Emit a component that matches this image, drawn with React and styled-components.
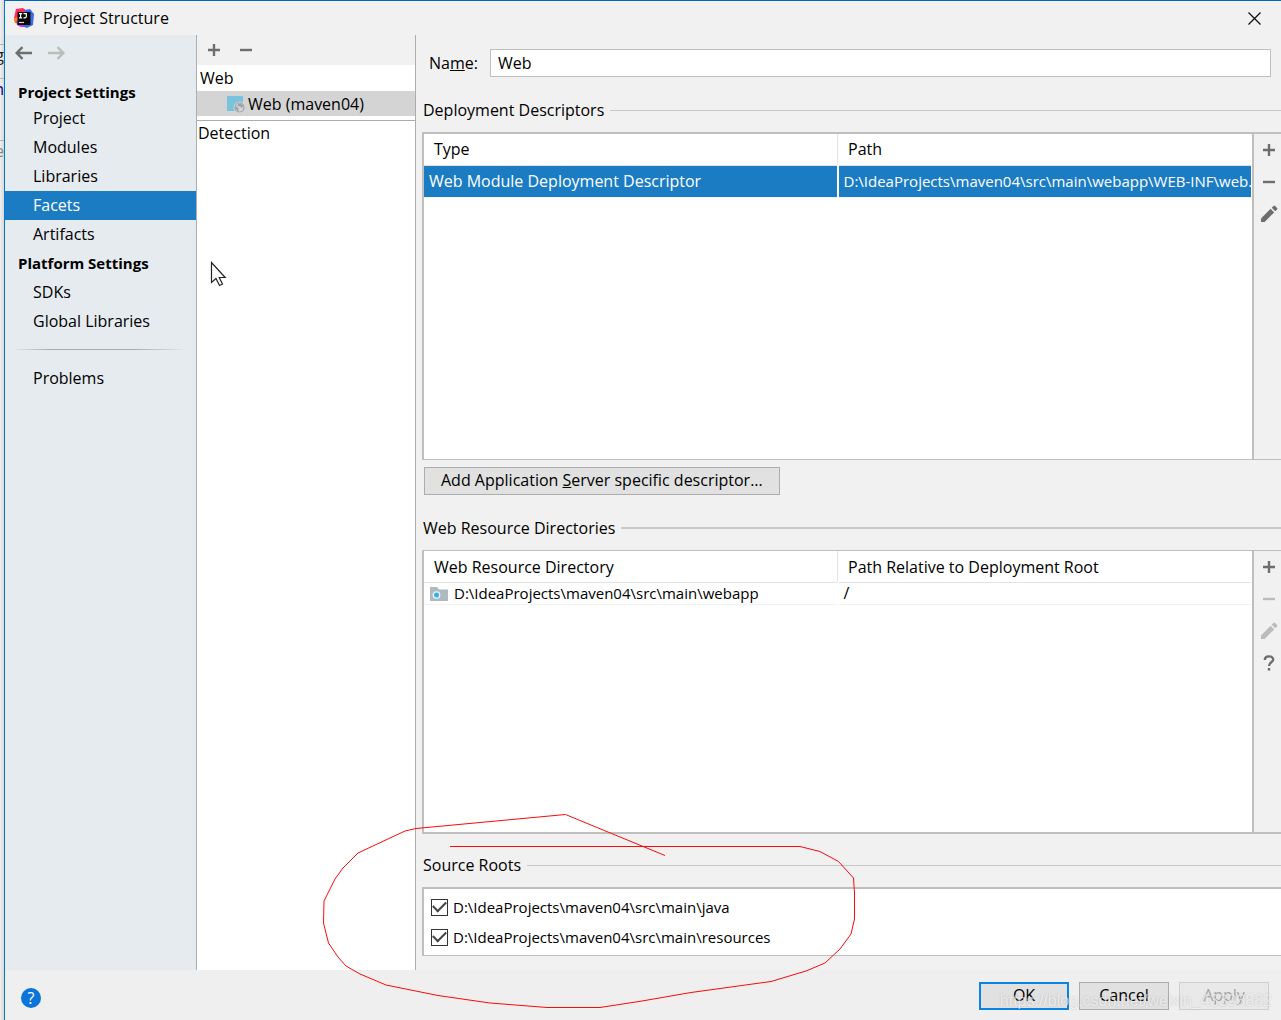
import React, { useState } from 'react';
import styled, { createGlobalStyle } from 'styled-components';

const GlobalStyle = createGlobalStyle`
  * {
    box-sizing: border-box;
  }

  body {
    margin: 0;
    background: #f0f0f0;
    color: #000;
    font-family: 'Open Sans', 'Noto Sans', sans-serif;
    font-size: 16px;
    line-height: 20px;
  }

  button, input {
    font: inherit;
    color: inherit;
  }
`;

const Desktop = styled.div`
  position: relative;
  display: flex;
  min-height: 100vh;
  overflow: hidden;
`;

const BackWindow = styled.div`
  flex: 0 0 4px;
  overflow: hidden;
  padding-top: 44px;
  background: linear-gradient(to right, #efefef, #d9d9d9);
  color: #333;
`;

const BackText = styled.div`
  height: ${({ $height }) => $height}px;
  border-top: 1px solid #b5b5b5;
  direction: rtl;
  color: ${({ $color }) => $color};
`;

const Window = styled.div`
  flex: 1;
  min-width: 0;
  display: flex;
  flex-direction: column;
  border-left: 1px solid #0078d7;
  border-top: 1px solid #0067c0;
`;

const TitleBar = styled.header`
  display: flex;
  align-items: center;
  gap: 9px;
  height: 34px;
  padding: 0 20px 0 9px;
  background: #f1f1f1;
`;

const Title = styled.h1`
  flex: 1;
  margin: 0;
  font-size: 16px;
  font-weight: 400;
`;

const IconButton = styled.button`
  display: flex;
  align-items: center;
  justify-content: center;
  padding: 0;
  border: none;
  background: none;
  color: #6e6e6e;

  &:disabled {
    color: #bcbcbc;
  }
`;

const Body = styled.div`
  flex: 1;
  min-height: 0;
  display: flex;
`;

const Sidebar = styled.nav`
  flex: 0 0 192px;
  border-right: 1px solid #adadad;
  background: #e5ebef;
`;

const History = styled.div`
  display: flex;
  gap: 16px;
  padding: 9px 10px 0;
  height: 43px;
  align-items: flex-start;
`;

const GroupTitle = styled.h2`
  margin: 0;
  padding: 4px 13px 0;
  height: ${({ $height }) => $height}px;
  font-size: 15px;
  font-weight: 700;
  line-height: 20px;
`;

const NavList = styled.ul`
  margin: 0;
  padding: 0;
  list-style: none;
`;

const NavLink = styled.a`
  display: block;
  padding: 4px 28px 5px;
  text-decoration: none;
  color: ${({ $active }) => ($active ? '#fff' : '#000')};
  background: ${({ $active }) => ($active ? '#1b7cc4' : 'transparent')};
`;

const NavDivider = styled.hr`
  height: 1px;
  margin: 13px 8px 14px;
  border: none;
  background: linear-gradient(to right, transparent, #adadad 20%, #adadad 70%, transparent);
`;

const FacetPane = styled.section`
  flex: 0 0 219px;
  border-right: 1px solid #adadad;
  background: #fff;
`;

const PaneToolbar = styled.div`
  display: flex;
  align-items: center;
  gap: 18px;
  height: 30px;
  padding: 0 10px;
  background: #f1f1f1;
`;

const FacetGroup = styled.div`
  padding: 3px 3px;
`;

const FacetItem = styled.div`
  display: flex;
  align-items: center;
  gap: 3px;
  height: 25px;
  padding-left: 30px;
  background: #d4d4d4;
`;

const Detection = styled.div`
  margin-top: 4px;
  padding: 2px 1px;
  border-top: 1px solid #adadad;
`;

const Editor = styled.main`
  flex: 1;
  min-width: 0;
  display: flex;
  flex-direction: column;
  padding: 14px 0 14px 6px;
  background: #f1f1f1;
`;

const NameRow = styled.div`
  display: flex;
  align-items: center;
  gap: 12px;
  padding: 0 10px 0 7px;
`;

const NameInput = styled.input`
  flex: 1;
  min-width: 0;
  height: 28px;
  padding: 0 7px;
  border: 1px solid #bfbfbf;
  background: #fff;
`;

const SectionTitle = styled.h2`
  display: flex;
  align-items: center;
  gap: 6px;
  margin: ${({ $top }) => $top}px 0 12px 1px;
  font-size: 16px;
  font-weight: 400;
  line-height: 20px;

  &::after {
    content: '';
    flex: 1;
    height: ${({ $thick }) => ($thick ? 2 : 1)}px;
    background: #c8c8c8;
  }
`;

const TableBox = styled.div`
  flex: ${({ $grow }) => $grow} 1 0;
  min-height: 160px;
  display: flex;
  border: solid #bfbfbf;
  border-width: ${({ $heavyBottom }) => ($heavyBottom ? '1px 0 2px 2px' : '2px 0 1px 2px')};
`;

const TableArea = styled.div`
  flex: 1;
  min-width: 0;
  padding-right: 1px;
  border-right: 2px solid #bfbfbf;
  background: #fff;
`;

const Table = styled.table`
  width: 100%;
  table-layout: fixed;
  border-collapse: collapse;
`;

const HeadCell = styled.th`
  height: 31px;
  padding: 0 10px;
  border-bottom: 1px solid #e3e3e3;
  font-weight: 400;
  text-align: left;

  & + & {
    border-left: 1px solid #e3e3e3;
  }
`;

const Cell = styled.td`
  height: ${({ $selected }) => ($selected ? 32 : 22)}px;
  padding: 0 0 0 5px;
  overflow: hidden;
  white-space: nowrap;
  color: ${({ $selected }) => ($selected ? '#fff' : '#000')};
  background: ${({ $selected }) => ($selected ? '#1b7cc4' : '#fff')};
  border-bottom: 1px solid #f3f3f3;

  & + & {
    padding-left: ${({ $selected }) => ($selected ? 9 : 5)}px;
    border-left: 2px solid #fff;
  }

  svg {
    margin: 0 6px 0 1px;
    vertical-align: -2px;
  }
`;

const PathText = styled.span`
  font-size: 15px;
`;

const SideTools = styled.div`
  flex: 0 0 27px;
  display: flex;
  flex-direction: column;
  align-items: center;
  padding-left: 3px;

  ${IconButton} {
    height: 32px;
  }
`;

const PushButton = styled.button`
  height: 28px;
  padding: 0 16px 2px;
  border: 1px solid #adadad;
  background: #e1e1e1;
`;

const DescriptorButton = styled(PushButton)`
  align-self: flex-start;
  margin: 7px 0 0 2px;
`;

const RootList = styled.div`
  display: flex;
  flex-direction: column;
  gap: 10px;
  padding: 8px 7px;
  border: solid #bfbfbf;
  border-width: 2px 0 1px 2px;
  background: #fff;
`;

const RootLabel = styled.label`
  display: flex;
  align-items: center;
  gap: 5px;
`;

const Tick = styled.input`
  appearance: none;
  width: 17px;
  height: 17px;
  margin: 0;
  display: grid;
  place-content: center;
  border: 1px solid #333;
  background: #fff;

  &:checked::before {
    content: '';
    width: 11px;
    height: 6px;
    margin-top: -4px;
    border: solid #444;
    border-width: 0 0 2px 2px;
    transform: rotate(-45deg);
  }
`;

const Footer = styled.footer`
  display: flex;
  align-items: center;
  gap: 10px;
  height: 50px;
  padding: 2px 12px 0 16px;
  background: #efefef;
`;

const HelpButton = styled.button`
  width: 20px;
  height: 20px;
  margin: 4px auto 0 0;
  padding: 0;
  border: none;
  border-radius: 50%;
  background: #0a74da;
  color: #fff;
  line-height: 20px;
`;

const DialogButton = styled(PushButton)`
  width: 90px;
  padding: 0 0 2px;
  border: ${({ $primary }) => ($primary ? '2px solid #0a84e0' : '1px solid #adadad')};

  &:disabled {
    border-color: #cfcfcf;
    background: #e9e9e9;
    color: #a5a5a5;
  }
`;

const Overlay = styled.svg`
  position: absolute;
  left: ${({ $left }) => $left}px;
  top: ${({ $top }) => $top}px;
  pointer-events: none;
`;

const Watermark = styled.div`
  position: absolute;
  right: 9px;
  bottom: 9px;
  font-family: 'Liberation Sans', sans-serif;
  font-size: 16px;
  line-height: 20px;
  color: rgba(255, 255, 255, 0.65);
  text-shadow: 0 0 2px rgba(0, 0, 0, 0.2);
  pointer-events: none;
`;

const PlusIcon = () => (
  <svg width="14" height="14" viewBox="0 0 14 14">
    <path d="M7 1v12M1 7h12" stroke="currentColor" strokeWidth="2.4" />
  </svg>
);

const MinusIcon = () => (
  <svg width="14" height="14" viewBox="0 0 14 14">
    <path d="M1 7h12" stroke="currentColor" strokeWidth="2.4" />
  </svg>
);

const PencilIcon = () => (
  <svg width="18" height="18" viewBox="0 0 18 18" fill="currentColor">
    <path d="M1 13.4 10.6 3.8l3.6 3.6L4.6 17H1z" />
    <path d="M11.7 2.7 13.5.9q.8-.7 1.6 0l2 2q.7.8 0 1.6l-1.8 1.8z" />
  </svg>
);

const QuestionIcon = () => (
  <svg width="12" height="16" viewBox="0 0 12 16" fill="none" stroke="currentColor" strokeWidth="2.4">
    <path d="M1.8 5C1.8.2 10.2.2 10.2 4.6 10.2 7.4 6 7.3 6 11" />
    <path d="M6 13v2.6" />
  </svg>
);

const ArrowIcon = ({ right }) => (
  <svg width="17" height="18" viewBox="0 0 17 18" fill="none" stroke="currentColor" strokeWidth="2.4">
    <path d={right ? 'M0 9h15M9.5 3.2 15.3 9l-5.8 5.8' : 'M17 9H2M7.5 3.2 1.7 9l5.8 5.8'} />
  </svg>
);

const CloseIcon = () => (
  <svg width="13" height="13" viewBox="0 0 13 13" stroke="#111" strokeWidth="1.3">
    <path d="M.5.5l12 12M12.5.5l-12 12" />
  </svg>
);

const AppLogo = () => (
  <svg width="20" height="20" viewBox="0 0 20 20">
    <path d="M2 1l7-1 4 3-4 9-8 3-1-5z" fill="#fe2c63" />
    <path d="M0 10l5-1 3 6-3 2-5-4z" fill="#fc801d" />
    <path d="M11 2l5-1 4 5-1 11-6 3-8-3z" fill="#3d6ae8" />
    <path d="M2 13l5-1 4 7-4 0-4-2z" fill="#b13be0" />
    <rect x="3.5" y="4" width="13" height="13" fill="#080808" />
    <path d="M5 5.7h3.2M6.6 5.7v4.1M5 9.8h3.2M9.5 5.7h2.8v3q0 1.2-2.8 1.1" fill="none" stroke="#fff" strokeWidth="1.2" />
    <path d="M5 14.5h5" stroke="#ddd" strokeWidth="1.2" />
  </svg>
);

const FacetIcon = () => (
  <svg width="18" height="18" viewBox="0 0 18 18">
    <path d="M0 1h16v15H0z" fill="#7ac3dd" />
    <circle cx="12.5" cy="12.5" r="6" fill="#d4d4d4" />
    <circle cx="12.5" cy="12.5" r="4.5" fill="#d4d4d4" stroke="#9aa4aa" strokeWidth="1.2" />
    <path d="M8.5 11l2.5 1.5 1 3.5-2-.5-1.5-2zM11 9l3.5-.5 1.8 2-1.3 2.5-2-1.5-2.5-.5z" fill="#9aa4aa" />
  </svg>
);

const FolderIcon = () => (
  <svg width="18" height="14" viewBox="0 0 18 14">
    <path d="M0 0h7l2 2.5h9V14H0z" fill="#aebac0" />
    <circle cx="6.5" cy="8" r="3.2" fill="#35b1e6" stroke="#e9f6fc" strokeWidth="1.3" />
  </svg>
);

const projectItems = ['Project', 'Modules', 'Libraries', 'Facets', 'Artifacts'];
const platformItems = ['SDKs', 'Global Libraries'];

const NavGroup = ({ items, active, onSelect }) => (
  <NavList>
    {items.map((item) => (
      <li key={item}>
        <NavLink href="#" $active={item === active} onClick={() => onSelect(item)}>{item}</NavLink>
      </li>
    ))}
  </NavList>
);

const App = () => {
  const [active, setActive] = useState('Facets');
  const [name, setName] = useState('Web');
  const [roots, setRoots] = useState([
    { path: 'D:\\IdeaProjects\\maven04\\src\\main\\java', checked: true },
    { path: 'D:\\IdeaProjects\\maven04\\src\\main\\resources', checked: true },
  ]);

  const toggleRoot = (path) => {
    setRoots(roots.map((root) => (root.path === path ? { ...root, checked: !root.checked } : root)));
  };

  return (
    <Desktop>
      <GlobalStyle />
      <BackWindow aria-hidden="true">
        <BackText $height={34} $color="#222">g</BackText>
        <BackText $height={62} $color="#00007a">n</BackText>
        <BackText $height={60} $color="#888">e</BackText>
      </BackWindow>
      <Window>
        <TitleBar>
          <AppLogo />
          <Title>Project Structure</Title>
          <IconButton aria-label="Close"><CloseIcon /></IconButton>
        </TitleBar>

        <Body>
          <Sidebar>
            <History>
              <IconButton aria-label="Back"><ArrowIcon /></IconButton>
              <IconButton aria-label="Forward" disabled><ArrowIcon right /></IconButton>
            </History>
            <GroupTitle $height={26}>Project Settings</GroupTitle>
            <NavGroup items={projectItems} active={active} onSelect={setActive} />
            <GroupTitle $height={29}>Platform Settings</GroupTitle>
            <NavGroup items={platformItems} active={active} onSelect={setActive} />
            <NavDivider />
            <NavGroup items={['Problems']} active={active} onSelect={setActive} />
          </Sidebar>

          <FacetPane>
            <PaneToolbar>
              <IconButton aria-label="Add facet"><PlusIcon /></IconButton>
              <IconButton aria-label="Remove facet"><MinusIcon /></IconButton>
            </PaneToolbar>
            <FacetGroup>Web</FacetGroup>
            <FacetItem><FacetIcon />Web (maven04)</FacetItem>
            <Detection>Detection</Detection>
          </FacetPane>

          <Editor>
            <NameRow>
              <label htmlFor="facet-name">Na<u>m</u>e:</label>
              <NameInput id="facet-name" value={name} onChange={(e) => setName(e.target.value)} />
            </NameRow>

            <SectionTitle $top={23}>Deployment Descriptors</SectionTitle>
            <TableBox $grow={328}>
              <TableArea>
                <Table>
                  <thead>
                    <tr><HeadCell>Type</HeadCell><HeadCell>Path</HeadCell></tr>
                  </thead>
                  <tbody>
                    <tr>
                      <Cell $selected>Web Module Deployment Descriptor</Cell>
                      <Cell $selected><PathText>D:\IdeaProjects\maven04\src\main\webapp\WEB-INF\web.xml</PathText></Cell>
                    </tr>
                  </tbody>
                </Table>
              </TableArea>
              <SideTools>
                <IconButton aria-label="Add descriptor"><PlusIcon /></IconButton>
                <IconButton aria-label="Remove descriptor"><MinusIcon /></IconButton>
                <IconButton aria-label="Edit descriptor"><PencilIcon /></IconButton>
              </SideTools>
            </TableBox>
            <DescriptorButton>Add Application <u>S</u>erver specific descriptor...</DescriptorButton>

            <SectionTitle $top={23} $thick>Web Resource Directories</SectionTitle>
            <TableBox $grow={283} $heavyBottom>
              <TableArea>
                <Table>
                  <thead>
                    <tr><HeadCell>Web Resource Directory</HeadCell><HeadCell>Path Relative to Deployment Root</HeadCell></tr>
                  </thead>
                  <tbody>
                    <tr>
                      <Cell><FolderIcon /><PathText>D:\IdeaProjects\maven04\src\main\webapp</PathText></Cell>
                      <Cell>/</Cell>
                    </tr>
                  </tbody>
                </Table>
              </TableArea>
              <SideTools>
                <IconButton aria-label="Add directory"><PlusIcon /></IconButton>
                <IconButton aria-label="Remove directory" disabled><MinusIcon /></IconButton>
                <IconButton aria-label="Edit directory" disabled><PencilIcon /></IconButton>
                <IconButton aria-label="Directory help"><QuestionIcon /></IconButton>
              </SideTools>
            </TableBox>

            <SectionTitle $top={21}>Source Roots</SectionTitle>
            <RootList>
              {roots.map((root) => (
                <RootLabel key={root.path}>
                  <Tick type="checkbox" checked={root.checked} onChange={() => toggleRoot(root.path)} />
                  <PathText>{root.path}</PathText>
                </RootLabel>
              ))}
            </RootList>
          </Editor>
        </Body>

        <Footer>
          <HelpButton aria-label="Help">?</HelpButton>
          <DialogButton $primary>OK</DialogButton>
          <DialogButton>Cancel</DialogButton>
          <DialogButton disabled>Apply</DialogButton>
        </Footer>
      </Window>

      <Overlay $left={210} $top={261} width="17" height="26" viewBox="0 0 17 26">
        <path d="M1.5 1.5v20l4.5-4 3.5 7 3-1.5-3.3-6.5h6z" fill="#fff" stroke="#222" strokeWidth="1.2" />
      </Overlay>
      <Overlay $left={320} $top={810} width="540" height="202" viewBox="320 810 540 202">
        <path
          d="M665 855.5 565.5 814.5 416 828.5 405 831 358 853 343 868 335 879 324 901 323.5 923 328.5 943 338 957 346 966 360 974 386 985 438 995.5 490 1003 547 1007.5H600L642 1001 691 992.5 771 981.5 806 971 825 963 840 949 851 934 854.5 919V893L853.5 878 838.5 861.5 820 851.5 800 846.5H450"
          fill="none"
          stroke="#fb0a0a"
          strokeWidth="1"
        />
      </Overlay>
      <Watermark>https://blog.csdn.net/weixin_43393882</Watermark>
    </Desktop>
  );
};

export default App;
